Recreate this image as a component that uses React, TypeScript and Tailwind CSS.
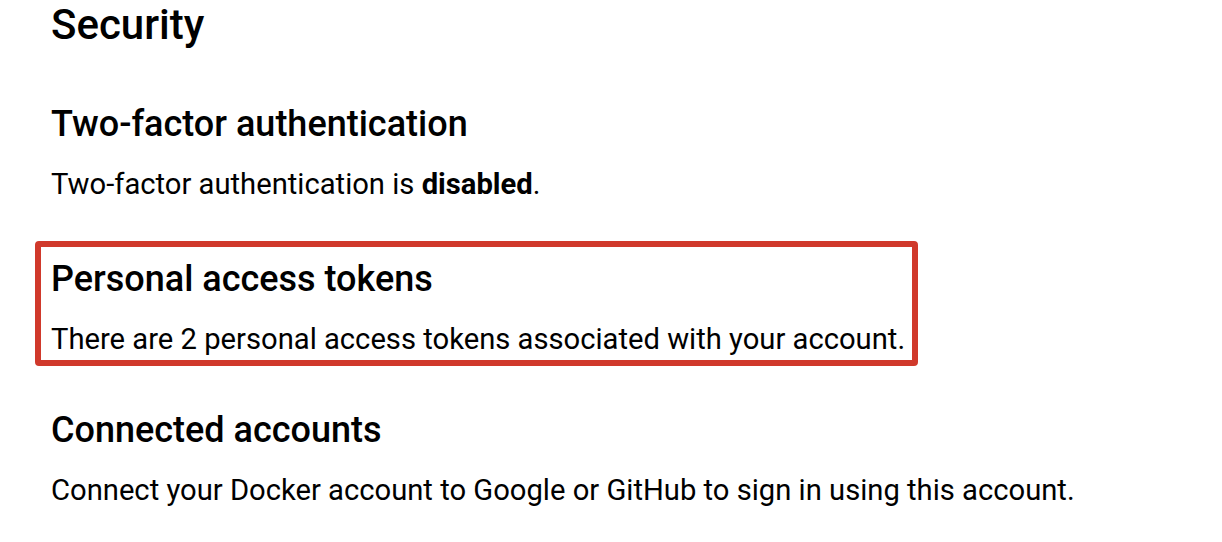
export default function App() {
  return (
    <div className="w-[1222px] h-[542px] bg-white text-black overflow-hidden" style={{ fontFamily: "Roboto, 'Liberation Sans', sans-serif" }}>
      <div className="pl-[51px] pt-[1px]">
        <h1 className="text-[42px] leading-[48px] font-medium">Security</h1>
        <div className="mt-[55px]">
          <h2 className="text-[36px] leading-[40px] font-medium">Two-factor authentication</h2>
          <p className="mt-[24px] text-[29.2px] leading-[32px]">
            Two-factor authentication is <span className="font-bold">disabled</span>.
          </p>
        </div>
        <div className="-ml-[16px] mt-[41px] w-[883px] h-[125px] border-[6px] border-[#d0392b] rounded-[4px] pl-[10px] pt-[12px]">
          <h2 className="text-[36px] leading-[40px] font-medium">Personal access tokens</h2>
          <p className="mt-[24px] text-[29.2px] leading-[32px]">
            There are 2 personal access tokens associated with your account.
          </p>
        </div>
        <div className="mt-[44px]">
          <h2 className="text-[36px] leading-[40px] font-medium">Connected accounts</h2>
          <p className="mt-[24px] text-[29.2px] leading-[32px]">
            Connect your Docker account to Google or GitHub to sign in using this account.
          </p>
        </div>
      </div>
    </div>
  );
}
